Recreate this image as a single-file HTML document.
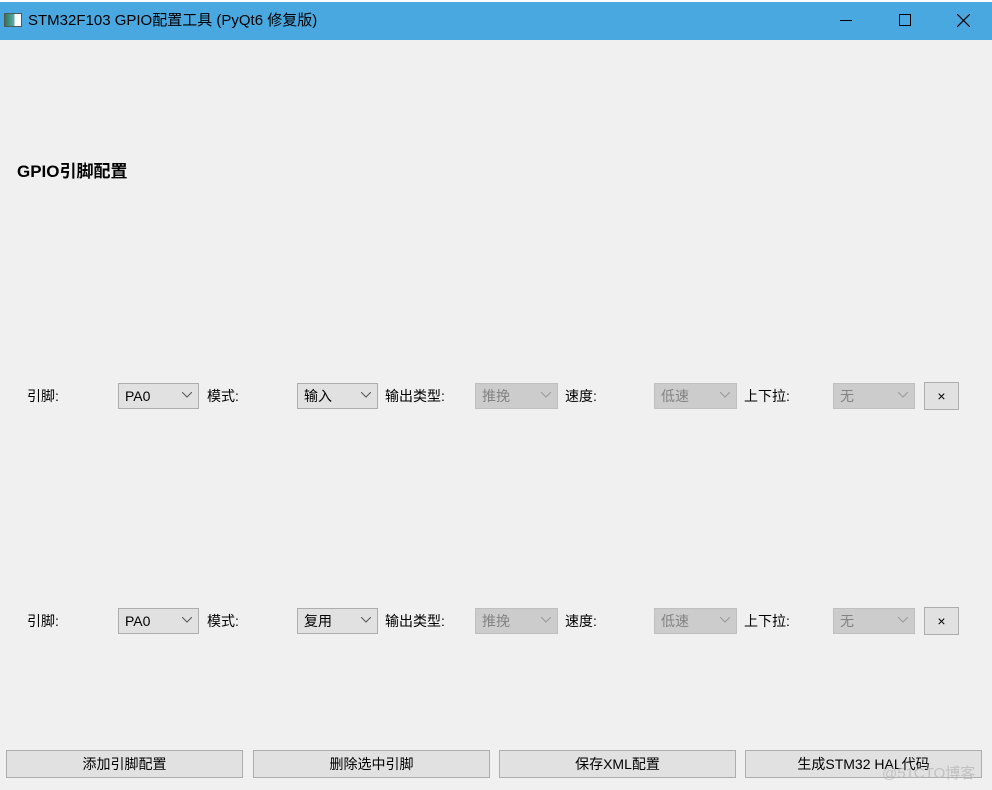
<!DOCTYPE html><html><head><meta charset="utf-8"><style>
*{margin:0;padding:0;box-sizing:border-box}
body{width:992px;height:790px;background:#f0f0f0;position:relative;overflow:hidden;font-family:"Liberation Sans","Noto Sans CJK SC",sans-serif;font-size:14px;color:#000}
.a{position:absolute}
.tb{left:0;top:2px;width:992px;height:38px;background:#4aa8e0}
.cb{position:absolute;height:26px;border:1px solid #adadad;background:#e1e1e1;padding-left:6px;line-height:24px;font-size:14px}
.cb.d{background:#cccccc;border-color:#bfbfbf;color:#838383}
.cb svg{position:absolute;right:6px;top:8px}
.lb{position:absolute;line-height:26px}
.bt{position:absolute;top:750px;height:28px;width:237px;border:1px solid #adadad;background:#e1e1e1;text-align:center;line-height:26px}
</style></head><body>
<div class="a" style="left:0;top:0;width:992px;height:2px;background:#fff"></div>
<div class="a tb"></div>
<div class="a" style="left:4px;top:13px;width:18px;height:14px;border:1px solid #555;background:linear-gradient(90deg,#2a7a50,#6ab 60%,#fff 60%)"></div>
<div class="a" style="left:28px;top:11px;font-size:15px;line-height:20px">STM32F103 GPIO配置工具 (PyQt6 修复版)</div>
<div class="a" style="left:840px;top:20px;width:12px;height:1px;background:#000"></div>
<div class="a" style="left:899px;top:14px;width:12px;height:12px;border:1px solid #000"></div>
<svg class="a" style="left:957px;top:14px" width="13" height="13"><path d="M0 0L13 13M13 0L0 13" stroke="#000" stroke-width="1.2"/></svg>
<div class="a" style="left:17px;top:160px;font-size:17px;font-weight:bold;line-height:24px">GPIO引脚配置</div>
<div id="r1"></div>
<script></script>
<!-- row 1 -->
<div class="lb" style="left:27px;top:383px">引脚:</div>
<div class="cb" style="left:118px;top:383px;width:81px">PA0<svg width="10" height="6"><path d="M0 0L5 5L10 0" fill="none" stroke="#555"/></svg></div>
<div class="lb" style="left:207px;top:383px">模式:</div>
<div class="cb" style="left:297px;top:383px;width:81px">输入<svg width="10" height="6"><path d="M0 0L5 5L10 0" fill="none" stroke="#555"/></svg></div>
<div class="lb" style="left:385px;top:383px">输出类型:</div>
<div class="cb d" style="left:475px;top:383px;width:83px">推挽<svg width="10" height="6"><path d="M0 0L5 5L10 0" fill="none" stroke="#999"/></svg></div>
<div class="lb" style="left:565px;top:383px">速度:</div>
<div class="cb d" style="left:654px;top:383px;width:83px">低速<svg width="10" height="6"><path d="M0 0L5 5L10 0" fill="none" stroke="#999"/></svg></div>
<div class="lb" style="left:744px;top:383px">上下拉:</div>
<div class="cb d" style="left:833px;top:383px;width:82px">无<svg width="10" height="6"><path d="M0 0L5 5L10 0" fill="none" stroke="#999"/></svg></div>
<div class="cb" style="left:924px;top:382px;width:35px;height:28px;padding:0;text-align:center;line-height:26px">×</div>
<!-- row 2 -->
<div class="lb" style="left:27px;top:608px">引脚:</div>
<div class="cb" style="left:118px;top:608px;width:81px">PA0<svg width="10" height="6"><path d="M0 0L5 5L10 0" fill="none" stroke="#555"/></svg></div>
<div class="lb" style="left:207px;top:608px">模式:</div>
<div class="cb" style="left:297px;top:608px;width:81px">复用<svg width="10" height="6"><path d="M0 0L5 5L10 0" fill="none" stroke="#555"/></svg></div>
<div class="lb" style="left:385px;top:608px">输出类型:</div>
<div class="cb d" style="left:475px;top:608px;width:83px">推挽<svg width="10" height="6"><path d="M0 0L5 5L10 0" fill="none" stroke="#999"/></svg></div>
<div class="lb" style="left:565px;top:608px">速度:</div>
<div class="cb d" style="left:654px;top:608px;width:83px">低速<svg width="10" height="6"><path d="M0 0L5 5L10 0" fill="none" stroke="#999"/></svg></div>
<div class="lb" style="left:744px;top:608px">上下拉:</div>
<div class="cb d" style="left:833px;top:608px;width:82px">无<svg width="10" height="6"><path d="M0 0L5 5L10 0" fill="none" stroke="#999"/></svg></div>
<div class="cb" style="left:924px;top:607px;width:35px;height:28px;padding:0;text-align:center;line-height:26px">×</div>
<div class="bt" style="left:6px">添加引脚配置</div>
<div class="bt" style="left:253px">删除选中引脚</div>
<div class="bt" style="left:499px">保存XML配置</div>
<div class="bt" style="left:745px">生成STM32 HAL代码</div>
<div class="a" style="left:882px;top:762px;color:rgba(180,180,180,.7);font-size:15px">@51CTO博客</div>
</body></html>
